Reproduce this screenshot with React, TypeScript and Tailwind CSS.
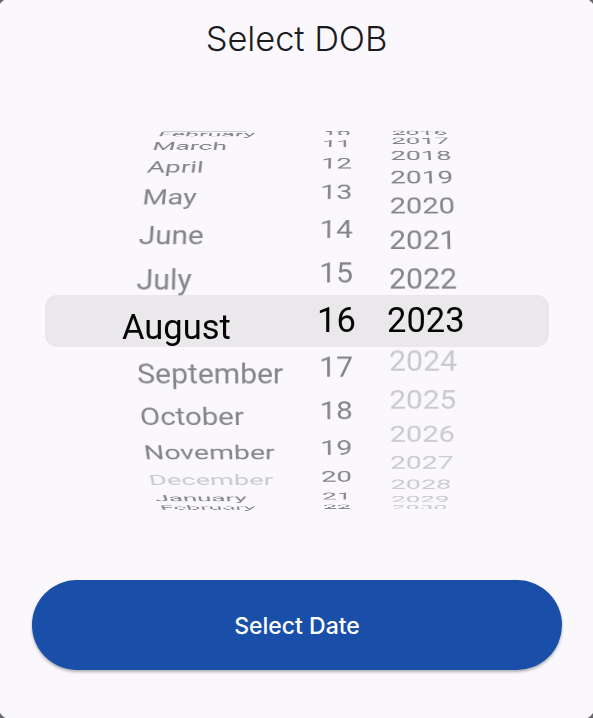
import React from "react";

const RADIUS = 254;

type WheelProps = {
  items: string[];
  /** Index of the selected entry. */
  selected: number;
  /** Angle between neighbouring entries, in radians. */
  step: number;
  /** Scroll offset, as a fraction of one step. */
  offset?: number;
  /** Indexes of the disabled entries. */
  disabled?: number[];
  /** Left shift of the magnified entry. */
  shift: string;
  className: string;
};

function Wheel({ items, selected, step, offset = 0, disabled = [], shift, className }: WheelProps) {
  return (
    <div
      className={`grid h-full shrink-0 items-center justify-items-start whitespace-nowrap text-[30.4px] leading-[40px] [perspective:635px] ${className}`}
    >
      {items.map((label, i) => {
        const angle = (i - selected + offset) * step;
        // Entries near the rim lean slightly toward the viewer so they stay legible.
        const lean = 0.1 * Math.sign(angle) * Math.pow(Math.abs(angle) / 1.15, 8);
        const active = i === selected;
        const color = active
          ? `text-[#050506] text-[34.5px] ${shift}`
          : disabled.includes(i)
            ? "text-[#cac9cc]"
            : "text-[#858487]";
        return (
          <span
            key={i}
            className={`[grid-area:1/1] ${color}`}
            style={{
              transform: active
                ? `translateY(${angle * RADIUS}px)`
                : `translateZ(${-RADIUS}px) rotateX(${-angle}rad) translateZ(${RADIUS}px) rotateX(${lean}rad)`,
            }}
          >
            {label}
          </span>
        );
      })}
    </div>
  );
}

const months = [
  "February", "March", "April", "May", "June", "July", "August",
  "September", "October", "November", "December", "January", "February",
];
const days = Array.from({ length: 13 }, (_, i) => String(10 + i));
const years = Array.from({ length: 15 }, (_, i) => String(2016 + i));

export default function App() {
  return (
    <div className="h-[718px] w-[593px] overflow-hidden bg-[#69686c]">
      <div className="-mx-[4px] -mt-[4px] flex h-[725px] flex-col rounded-[20px] bg-[#faf8fc] px-[4px] pt-[4px]">
        <h1 className="flex h-[78px] shrink-0 items-center justify-center font-['Inter'] text-[34.5px] font-[350] tracking-[-0.1px] text-[#1b1b1f]">
          Select DOB
        </h1>

        <div className="mt-[53px] grid h-[380px] shrink-0 font-[Roboto]">
          <div className="ml-[45px] mr-[44px] h-[52px] self-center rounded-[12px] bg-[#eae8eb] [grid-area:1/1]" />
          {/* Edge-on entries at the top of the wheels */}
          <div className="flex h-px self-start [grid-area:1/1]">
            <div className="ml-[163px] w-[84px] bg-[#cfced1]" />
            <div className="ml-[89px] w-[13px] bg-[#d2d1d4]" />
            <div className="ml-[46px] w-[49px] bg-[#e8e6ea]" />
          </div>
          <div className="-mt-[1px] flex h-[380px] pl-[136px] [grid-area:1/1]">
            <Wheel
              items={months}
              selected={6}
              step={0.188}
              offset={0.15}
              disabled={[10]}
              shift="-ml-[14px]"
              className="w-[183px] [perspective-origin:125px_50%]"
            />
            <Wheel
              items={days}
              selected={6}
              step={0.188}
              shift="-ml-[2px]"
              className="w-[70px] [perspective-origin:22px_50%]"
            />
            <Wheel
              items={years}
              selected={7}
              step={0.1634}
              disabled={[8, 9, 10, 11, 12, 13, 14]}
              shift="-ml-[2px]"
              className="w-[90px] [perspective-origin:15px_50%]"
            />
          </div>
        </div>

        <button className="ml-[32px] mr-[31px] mt-[69px] h-[90px] shrink-0 rounded-full bg-[#1a4fa9] pt-[2px] font-['Inter'] text-[23px] font-medium text-white shadow-[0_2px_3px_rgba(0,0,0,0.3)]">
          Select Date
        </button>
      </div>
    </div>
  );
}
